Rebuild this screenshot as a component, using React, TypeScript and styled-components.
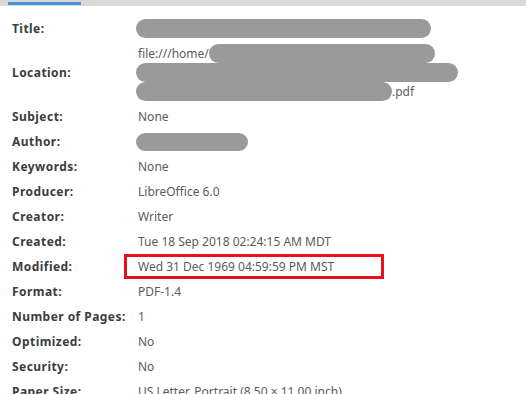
import React from "react";
import styled, { createGlobalStyle } from "styled-components";

const GlobalStyle = createGlobalStyle`
  html, body {
    margin: 0;
    padding: 0;
    background: #ffffff;
    overflow: hidden;
  }
  body {
    font-family: "Noto Sans", "Open Sans", sans-serif;
  }
`;

const Page = styled.div`
  width: 526px;
  height: 394px;
  background: #ffffff;
  overflow: hidden;
`;

const TabBar = styled.div`
  height: 6px;
  background: #d9d9d9;
  display: flex;
  align-items: flex-end;
  padding-left: 8px;
`;

const TabIndicator = styled.div`
  width: 73px;
  height: 3px;
  margin-bottom: 1px;
  background: #4a90d9;
`;

const Grid = styled.div`
  display: grid;
  grid-template-columns: 126px 1fr;
  padding: 10px 0 0 12px;
`;

const Label = styled.div`
  display: flex;
  align-items: center;
  height: 25px;
  font-size: 12px;
  font-weight: 700;
  letter-spacing: 0.45px;
  color: #3a3c3e;
  white-space: nowrap;
  align-self: center;
`;

const Value = styled.div<{ $tall?: boolean }>`
  position: relative;
  display: flex;
  flex-direction: column;
  justify-content: center;
  min-height: 25px;
  padding: ${(p) => (p.$tall ? "3px 0" : "0")};
  font-size: 12px;
  color: #5a5c5e;
  white-space: nowrap;
`;

const Line = styled.div`
  display: flex;
  align-items: center;
  height: 19px;
`;

const Redacted = styled.span<{ $w: number; $h?: number; $gap?: number }>`
  display: inline-block;
  width: ${(p) => p.$w}px;
  height: ${(p) => p.$h ?? 19}px;
  margin-left: ${(p) => p.$gap ?? -2}px;
  background: #9a9a9a;
  border-radius: 10px;
`;

const Highlight = styled.span`
  position: absolute;
  left: -14px;
  top: 0;
  width: 260px;
  height: 25px;
  border: 3px solid #e8101a;
  box-sizing: border-box;
`;

type Row = { label: string; value: string };

const rows: Row[] = [
  { label: "Subject:", value: "None" },
  { label: "Author:", value: "" },
  { label: "Keywords:", value: "None" },
  { label: "Producer:", value: "LibreOffice 6.0" },
  { label: "Creator:", value: "Writer" },
  { label: "Created:", value: "Tue 18 Sep 2018 02:24:15 AM MDT" },
  { label: "Modified:", value: "Wed 31 Dec 1969 04:59:59 PM MST" },
  { label: "Format:", value: "PDF-1.4" },
  { label: "Number of Pages:", value: "1" },
  { label: "Optimized:", value: "No" },
  { label: "Security:", value: "No" },
  { label: "Paper Size:", value: "US Letter, Portrait (8.50 × 11.00 inch)" },
];

export default function App() {
  return (
    <Page>
      <GlobalStyle />
      <TabBar>
        <TabIndicator />
      </TabBar>
      <Grid>
        <Label>Title:</Label>
        <Value>
          <Redacted $w={295} />
        </Value>

        <Label>Location:</Label>
        <Value $tall>
          <Line>
            file:///home/
            <Redacted $w={226} $gap={0} />
          </Line>
          <Line>
            <Redacted $w={322} />
          </Line>
          <Line>
            <Redacted $w={256} />
            .pdf
          </Line>
        </Value>

        {rows.map((r) => (
          <React.Fragment key={r.label}>
            <Label>{r.label}</Label>
            <Value>
              {r.label === "Author:" ? <Redacted $w={112} $h={18} /> : r.value}
              {r.label === "Modified:" && <Highlight />}
            </Value>
          </React.Fragment>
        ))}
      </Grid>
    </Page>
  );
}
